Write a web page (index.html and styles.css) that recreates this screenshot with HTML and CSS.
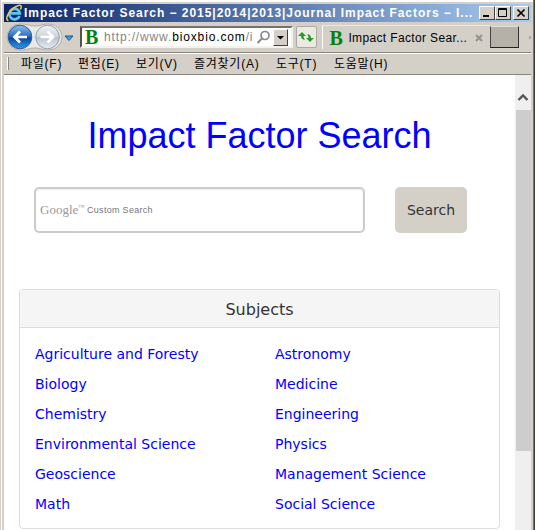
FILE: index.html
```html
<!DOCTYPE html>
<html lang="ko">
<head>
<meta charset="utf-8">
<title>Impact Factor Search</title>
<link rel="stylesheet" href="styles.css">
</head>
<body>
<div class="window">
  <header class="titlebar">
    <svg class="ie" width="18" height="18" viewBox="0 0 18 18"><path d="M14.500 12A5.300 5.300 0 1 1 14.800 9.300H5" fill="none" stroke="#5cc4f2" stroke-width="2.800"/><path d="M3.500 16.500C-1.500 16 5 4 13.500 1.500c3.500-.8 3 1.500 2 4" fill="none" stroke="#f5c542" stroke-width="1.500"/></svg>
    <span class="title-text">Impact Factor Search − 2015|2014|2013|Journal Impact Factors − I...</span>
    <div class="controls">
      <span class="control"><svg width="15" height="14"><path d="M3 9h6" stroke="#000" stroke-width="2"/></svg></span>
      <span class="control"><svg width="15" height="14"><path d="M2.500 1.500h8v8h-8zM2 2.500h9" fill="none" stroke="#000"/></svg></span>
      <span class="control close"><svg width="15" height="14"><path d="M3.500 2.500l7 7M10.500 2.500l-7 7" stroke="#000" stroke-width="1.700"/></svg></span>
    </div>
  </header>
  <div class="navbar">
    <svg class="arrows" width="57" height="28" viewBox="0 0 57 28">
      <defs>
        <linearGradient id="blue" x2="0" y2="1"><stop stop-color="#8fc0ee"/><stop offset=".45" stop-color="#2f70c2"/><stop offset=".55" stop-color="#0c469f"/><stop offset="1" stop-color="#2f9cf0"/></linearGradient>
        <linearGradient id="pale" x2="0" y2="1"><stop stop-color="#edf0f4"/><stop offset=".48" stop-color="#cfd5dd"/><stop offset=".52" stop-color="#b8c2ce"/><stop offset="1" stop-color="#e7edf4"/></linearGradient>
      </defs>
      <path d="M14 1C22 1 22 3 29 3S35 1 43 1a13 13 0 0 1 0 26C35 27 35 25 29 25S22 27 14 27A13 13 0 0 1 14 1z" fill="#e9e8e6" stroke="#b2afa9"/>
      <circle cx="14" cy="14" r="11.800" fill="url(#blue)" stroke="#285b9b"/>
      <circle cx="41.500" cy="14" r="11.800" fill="url(#pale)" stroke="#969da6"/>
      <path d="M21 14H9M14 8.500L8.500 14l5.500 5.500M34.500 14h12M41.500 8.500L47 14l-5.500 5.500" fill="none" stroke="#fff" stroke-width="2.700"/>
    </svg>
    <svg class="history" width="10" height="7"><path d="M1 1h8L5 5.500z" fill="#38a5df" stroke="#1b5485"/></svg>
    <div class="address">
      <span class="favicon">B</span>
      <span class="url">http://www.<b>bioxbio.com</b>/i</span>
      <svg class="lens" width="15" height="15"><circle cx="9" cy="5.500" r="4" fill="none" stroke="#888" stroke-width="1.700"/><path d="M6 8.500L1.500 13" stroke="#888" stroke-width="2"/></svg>
      <span class="drop"><svg width="13" height="15"><path d="M3 6h7L6.500 9.500z"/></svg></span>
    </div>
    <span class="refresh"><svg width="16" height="16" viewBox="0 0 16 16"><path d="M0 7l4-4 4 4H5.500q0 2.500 1.500 4-4-.5-4-4zM16 9l-4 4-4-4h2.500q0-2.500-1.500-4 4 .5 4 4z" fill="#249b27"/></svg></span>
    <div class="tab"><span class="favicon">B</span><span class="tab-text">Impact Factor Sear...</span><svg class="tab-close" width="8" height="8"><path d="M1 1l6 6M7 1L1 7" stroke="#95928d" stroke-width="2"/></svg></div>
    <span class="new-tab"></span><span class="dot"></span>
  </div>
  <nav class="menu">
    <i class="grip"></i><span class="m1">파일(F)</span><span class="m2">편집(E)</span><span class="m3">보기(V)</span><span class="m4">즐겨찾기(A)</span><span class="m5">도구(T)</span><span class="m6">도움말(H)</span>
  </nav>
  <div class="viewport">
    <main class="page">
      <h1>Impact Factor Search</h1>
      <div class="search">
        <div class="field"><span class="google">Google<sup>™</sup></span><span class="custom">Custom Search</span></div>
        <button class="button">Search</button>
      </div>
      <section class="panel">
        <h2>Subjects</h2>
        <div class="subjects">
          <a>Agriculture and Foresty</a><a>Astronomy</a>
          <a>Biology</a><a>Medicine</a>
          <a>Chemistry</a><a>Engineering</a>
          <a>Environmental Science</a><a>Physics</a>
          <a>Geoscience</a><a>Management Science</a>
          <a>Math</a><a>Social Science</a>
        </div>
      </section>
    </main>
    <aside class="scrollbar"><svg width="16" height="35"><path d="M3.500 25l4.500-4.500 4.500 4.500" fill="none" stroke="#555" stroke-width="2.400"/></svg><div class="thumb"></div></aside>
  </div>
</div>
</body>
</html>
```
FILE: styles.css
```css
* { box-sizing: border-box; }
body { margin: 0; overflow: hidden; font-family: "Liberation Sans", "Noto Sans CJK KR", sans-serif; }
svg { display: block; flex: none; }
.window { width: 535px; height: 530px; padding: 4px 4px 0; background: #d4d0c8; box-shadow: inset -1px 0 #3f3b35, inset -2px 0 #77736c, inset 1px 0 #d4d0c8, inset 2px 2px #fff; overflow: hidden; }
.titlebar { height: 18px; display: flex; align-items: center; padding: 0 2px 0 1px; background: linear-gradient(90deg, #0a246a, #a6caf0); }
.title-text { width: 455px; padding-left: 1px; font-size: 12px; font-weight: bold; letter-spacing: .96px; line-height: 18px; color: #fff; white-space: nowrap; }
.controls { display: flex; margin-left: auto; }
.control { width: 16px; height: 14px; background: #d4d0c8; border: solid; border-width: 1px; border-color: #fff #404040 #404040 #fff; overflow: hidden; }
.close { margin-left: 2px; }
.navbar { height: 30px; display: flex; align-items: center; padding-left: 2px; }
.history { margin: 2px 0 0 1px; }
.address { width: 214px; height: 22px; display: flex; align-items: center; margin-left: 6px; padding: 0 2px 0 3px; border: 2px solid; border-color: #76736d #f4f2ed #f4f2ed #55524e; background: #fff; }
.favicon { width: 14px; font: bold 20px/18px "Liberation Serif", serif; color: #08810b; }
.url { width: 152px; margin-left: 5px; font-size: 12px; letter-spacing: .86px; color: #858585; white-space: nowrap; }
.url b { font-weight: normal; color: #000; }
.lens { margin-right: 2px; }
.drop { width: 15px; height: 17px; flex: none; border: 1px solid; border-color: #fff #404040 #404040 #fff; background: #d4d0c8; }
.refresh { width: 22px; height: 22px; display: grid; place-items: center; margin-left: 3px; border: 1px solid #aaa9a7; border-radius: 2px; background: #ece9e3; }
.tab { width: 169px; height: 24px; display: flex; align-items: center; margin-left: 5px; padding-left: 6px; border-left: 1px solid #fff; border-top: 1px solid #eceae5; }
.tab-text { width: 122px; margin-left: 5px; font-size: 12px; letter-spacing: .36px; white-space: nowrap; }
.tab-close { margin-left: 5px; }
.new-tab { width: 29px; height: 22px; margin-top: -1px; border: 1px solid; border-color: #e2dfd9 #333 #222 #444; background: #b6b1a8; }
.dot { width: 2px; height: 3px; margin-left: 10px; background: #aaa59e; }
.menu { height: 23px; display: flex; align-items: center; padding-bottom: 2px; border-top: 1px solid #88857f; border-bottom: 1px solid #88857f; box-shadow: inset 0 1px #fff; font-size: 12px; letter-spacing: .75px; white-space: nowrap; }
.grip { width: 2px; height: 13px; margin: 2px 12px 0 3px; border-left: 1px solid #fff; border-right: 1px solid #88857f; }
.menu span { flex: none; }
.m1 { width: 57px; } .m2 { width: 58px; } .m3 { width: 58px; } .m4 { width: 82px; } .m5 { width: 58px; }
.viewport { height: 455px; display: flex; background: #fff; }
.page { width: 511px; padding: 38px 15px 0; }
h1 { height: 46px; margin: 0 0 28px; font-size: 36px; line-height: 45px; font-weight: normal; color: #00f; text-align: center; white-space: nowrap; }
.search { height: 46px; display: flex; margin-left: 15px; }
.field { width: 331px; display: flex; align-items: center; padding-left: 4px; border: 2px solid #ccc; border-radius: 5px; box-shadow: inset 0 1px 2px #eee; color: #777; }
.google { width: 47px; padding-bottom: 1px; font: 13px "Liberation Serif", serif; color: #999; white-space: nowrap; }
sup { font-size: 6px; line-height: 0; }
.custom { font-size: 9px; letter-spacing: .3px; }
.button { width: 72px; margin-left: 30px; padding: 0; border: 0; border-radius: 5px; background: #d4d0c8; font: 14px "DejaVu Sans", sans-serif; color: #333; }
.panel { height: 240px; margin-top: 56px; border: 1px solid #ddd; border-radius: 4px; overflow: hidden; }
h2 { height: 38px; margin: 0; border-bottom: 1px solid #ddd; background: #f5f5f5; color: #333; font: 16px/39px "DejaVu Sans", sans-serif; text-align: center; }
.subjects { display: grid; grid-template-columns: 240px 1fr; grid-auto-rows: 30px; padding: 11px 15px; }
.subjects a { font: 14px/30px "DejaVu Sans", sans-serif; color: #00f; white-space: nowrap; }
.scrollbar { width: 16px; background: #efefef; }
.thumb { height: 341px; margin-left: 1px; background: #cdcdcd; }
```
